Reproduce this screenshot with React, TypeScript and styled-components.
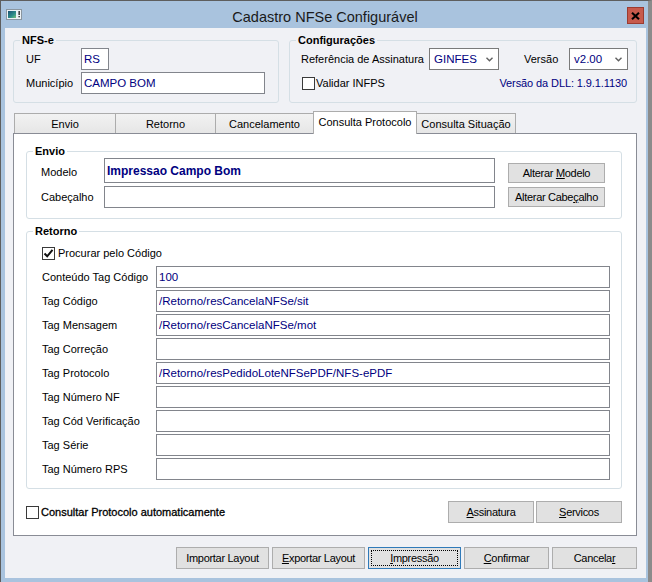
import React from 'react';
import styled, { createGlobalStyle } from 'styled-components';

const GlobalStyle = createGlobalStyle`
  html, body {
    margin: 0;
    padding: 0;
    background: #ffffff;
  }
  body {
    font-family: "Liberation Sans", Arial, sans-serif;
    font-size: 11px;
    color: #000;
  }
  * {
    box-sizing: border-box;
  }
`;

const Window = styled.div`
  width: 652px;
  height: 582px;
  display: flex;
  flex-direction: column;
  background: #a9c3de;
  border-top: 1px solid #5e5e5e;
  border-left: 1px solid #5e5e5e;
  border-right: 4px solid #8b8b8b;
`;

const TitleBar = styled.div`
  height: 27px;
  flex: none;
  display: grid;
  grid-template-columns: 1fr auto 1fr;
  align-items: center;
  padding: 0 4px 0 5px;
`;

const TitleText = styled.div`
  font-size: 14.5px;
  color: #1a1a1a;
  padding-top: 4px;
`;

const CloseButton = styled.div`
  justify-self: end;
  width: 17px;
  height: 17px;
  margin-top: 2px;
  background: #c75a4c;
  border: 1px solid #9c3b30;
  display: flex;
  align-items: center;
  justify-content: center;
`;

const Client = styled.div`
  flex: 1;
  margin: 0 2px 4px 4px;
  background: #f0f1f5;
  padding: 5px 9px 0 8px;
  display: flex;
  flex-direction: column;
`;

const TopRow = styled.div`
  display: flex;
  gap: 10px;
`;

const GroupBox = styled.fieldset<{ $w?: number }>`
  margin: 0;
  padding: 0;
  min-width: 0;
  border: 1px solid #d5dfe5;
  border-radius: 3px;
  width: ${(p) => (p.$w ? `${p.$w}px` : 'auto')};
`;

const Legend = styled.legend`
  margin-left: 6px;
  padding: 0 2px;
  font-weight: bold;
  font-size: 11px;
  line-height: 14px;
`;

const NfseBody = styled.div`
  display: grid;
  grid-template-columns: 55px auto;
  row-gap: 2px;
  align-items: center;
  justify-items: start;
  padding: 1px 0 8px 12px;
`;

const ConfigBody = styled.div`
  display: flex;
  flex-direction: column;
  gap: 2px;
  padding: 1px 8px 8px 11px;
`;

const Line = styled.div<{ $between?: boolean }>`
  display: flex;
  align-items: center;
  height: 22px;
  justify-content: ${(p) => (p.$between ? 'space-between' : 'flex-start')};
`;

const Label = styled.span<{ $w?: number; $ml?: number }>`
  flex: none;
  width: ${(p) => (p.$w ? `${p.$w}px` : 'auto')};
  margin-left: ${(p) => p.$ml ?? 0}px;
  white-space: nowrap;
  line-height: 22px;
`;

const TextBox = styled.input<{ $w?: number; $tall?: boolean }>`
  width: ${(p) => (p.$w ? `${p.$w}px` : 'auto')};
  flex: ${(p) => (p.$w ? 'none' : '1')};
  min-width: 0;
  height: ${(p) => (p.$tall ? 25 : 22)}px;
  margin: 0;
  padding: 0 2px;
  border: 1px solid #82858c;
  border-radius: 0;
  background: #fff;
  color: #000080;
  font-family: "Liberation Sans", Arial, sans-serif;
  font-size: ${(p) => (p.$tall ? 12 : 11.5)}px;
  font-weight: ${(p) => (p.$tall ? 'bold' : 'normal')};
  outline: none;
`;

const SelectBox = styled.div<{ $w: number }>`
  width: ${(p) => p.$w}px;
  flex: none;
  height: 22px;
  display: flex;
  align-items: center;
  justify-content: space-between;
  padding: 0 5px 0 4px;
  background: #fff;
  border: 1px solid #7a7a7a;
  color: #000080;
  font-size: 11.5px;
`;

const CheckWrap = styled.label<{ $gap?: number; $ml?: number }>`
  display: inline-flex;
  align-items: center;
  gap: ${(p) => p.$gap ?? 3}px;
  margin-left: ${(p) => p.$ml ?? 0}px;
  white-space: nowrap;
`;

const Box = styled.span`
  width: 13px;
  height: 13px;
  flex: none;
  border: 1px solid #3a3a3a;
  background: #fff;
  display: flex;
  align-items: center;
  justify-content: center;
`;

const AutoText = styled.span`
  -webkit-text-stroke: 0.3px #000;
`;

const DllText = styled.span`
  color: #000080;
  margin-right: 1px;
  letter-spacing: -0.1px;
`;

const TabStrip = styled.div`
  display: flex;
  align-items: flex-end;
  height: 22px;
  margin-top: 8px;
  padding-left: 1px;
`;

const Tab = styled.div<{ $active?: boolean; $w: number }>`
  position: relative;
  z-index: ${(p) => (p.$active ? 1 : 0)};
  width: ${(p) => p.$w}px;
  height: ${(p) => (p.$active ? 23 : 20)}px;
  margin-left: -1px;
  margin-bottom: ${(p) => (p.$active ? -1 : 0)}px;
  padding-bottom: ${(p) => (p.$active ? 2 : 0)}px;
  border: 1px solid #acacac;
  border-bottom: none;
  background: ${(p) => (p.$active ? '#ffffff' : 'linear-gradient(#f2f2f2, #e6e6e6)')};
  display: flex;
  align-items: center;
  justify-content: center;
  white-space: nowrap;
  &:first-child {
    margin-left: 0;
  }
`;

const Panel = styled.div`
  border: 1px solid #898c95;
  background: #fff;
  padding: 10px 14px 12px 12px;
  display: flex;
  flex-direction: column;
`;

const EnvioBody = styled.div`
  display: flex;
  flex-direction: column;
  gap: 3px;
  padding: 0 16px 10px 14px;
`;

const EnvioRow = styled.div<{ $tall?: boolean }>`
  display: flex;
  align-items: ${(p) => (p.$tall ? 'flex-end' : 'center')};
  height: ${(p) => (p.$tall ? 25 : 22)}px;
`;

const RetornoBody = styled.div`
  display: flex;
  flex-direction: column;
  gap: 2px;
  padding: 4px 11px 8px 15px;
  margin-top: 0;
`;

const RetornoGroup = styled(GroupBox)`
  margin-top: 5px;
`;

const Footer = styled.div`
  display: flex;
  align-items: center;
  height: 22px;
  margin-top: 12px;
  gap: 2px;
`;

const Spacer = styled.div`
  flex: 1;
`;

const Button = styled.button<{ $w: number; $h?: number; $focused?: boolean }>`
  width: ${(p) => p.$w}px;
  height: ${(p) => p.$h ?? 22}px;
  flex: none;
  margin: 0;
  padding: 0;
  background: #e1e1e1;
  border: 1px solid ${(p) => (p.$focused ? '#2f7ab9' : '#adadad')};
  border-radius: 0;
  color: #000;
  font-family: "Liberation Sans", Arial, sans-serif;
  font-size: 11px;
  letter-spacing: -0.3px;
  outline: ${(p) => (p.$focused ? '1px dotted #000' : 'none')};
  outline-offset: -4px;
  u {
    text-decoration: underline;
  }
`;

const SideButton = styled(Button)`
  margin-left: 13px;
`;

const BottomBar = styled.div`
  display: flex;
  justify-content: flex-end;
  gap: 3px;
  margin-top: 11px;
`;

function AppIcon() {
  return (
    <svg width="16" height="11" viewBox="0 0 16 11">
      <defs>
        <linearGradient id="ig" x1="0" y1="0" x2="1" y2="1">
          <stop offset="0" stopColor="#1b4f72" />
          <stop offset="0.6" stopColor="#2f8f8a" />
          <stop offset="1" stopColor="#7cc47a" />
        </linearGradient>
      </defs>
      <rect x="0.5" y="0.5" width="15" height="10" fill="#eef2f5" stroke="#8a96a0" />
      <rect x="2" y="2" width="8" height="7" fill="url(#ig)" />
      <rect x="12.5" y="2" width="1.3" height="4" fill="#1a1a1a" />
      <rect x="12.5" y="7" width="1.3" height="1.3" fill="#1a1a1a" />
    </svg>
  );
}

function Chevron() {
  return (
    <svg width="7" height="5" viewBox="0 0 7 5">
      <path d="M0.5 0.8 L3.5 3.8 L6.5 0.8" fill="none" stroke="#606060" strokeWidth="1.4" />
    </svg>
  );
}

function CheckBox({ checked }: { checked?: boolean }) {
  return (
    <Box>
      {checked && (
        <svg width="11" height="11" viewBox="0 0 11 11">
          <path d="M1.5 5.5 L4.2 8.3 L9.5 1.8" fill="none" stroke="#111" strokeWidth="2" />
        </svg>
      )}
    </Box>
  );
}

const retornoFields: { label: string; value: string }[] = [
  { label: 'Conteúdo Tag Código', value: '100' },
  { label: 'Tag Código', value: '/Retorno/resCancelaNFSe/sit' },
  { label: 'Tag Mensagem', value: '/Retorno/resCancelaNFSe/mot' },
  { label: 'Tag Correção', value: '' },
  { label: 'Tag Protocolo', value: '/Retorno/resPedidoLoteNFSePDF/NFS-ePDF' },
  { label: 'Tag Número NF', value: '' },
  { label: 'Tag Cód Verificação', value: '' },
  { label: 'Tag Série', value: '' },
  { label: 'Tag Número RPS', value: '' },
];

const tabs = [
  { name: 'Envio', w: 102 },
  { name: 'Retorno', w: 101 },
  { name: 'Cancelamento', w: 99 },
  { name: 'Consulta Protocolo', w: 104, active: true },
  { name: 'Consulta Situação', w: 100 },
];

export default function App() {
  return (
    <>
      <GlobalStyle />
      <Window>
        <TitleBar>
          <AppIcon />
          <TitleText>Cadastro NFSe Configurável</TitleText>
          <CloseButton>
            <svg width="9" height="8" viewBox="0 0 9 8">
              <path d="M1 0.8 L8 7.2 M8 0.8 L1 7.2" stroke="#000" strokeWidth="2.1" />
            </svg>
          </CloseButton>
        </TitleBar>

        <Client>
          <TopRow>
            <GroupBox $w={266}>
              <Legend>NFS-e</Legend>
              <NfseBody>
                <Label>UF</Label>
                <TextBox $w={28} defaultValue="RS" />
                <Label>Município</Label>
                <TextBox $w={184} defaultValue="CAMPO BOM" />
              </NfseBody>
            </GroupBox>

            <GroupBox $w={348}>
              <Legend>Configurações</Legend>
              <ConfigBody>
                <Line>
                  <Label $w={128}>Referência de Assinatura</Label>
                  <SelectBox $w={70}>
                    GINFES
                    <Chevron />
                  </SelectBox>
                  <Label $w={45} $ml={25}>Versão</Label>
                  <SelectBox $w={59}>
                    v2.00
                    <Chevron />
                  </SelectBox>
                </Line>
                <Line $between>
                  <CheckWrap $gap={1} $ml={1}>
                    <CheckBox />
                    Validar INFPS
                  </CheckWrap>
                  <DllText>Versão da DLL: 1.9.1.1130</DllText>
                </Line>
              </ConfigBody>
            </GroupBox>
          </TopRow>

          <TabStrip>
            {tabs.map((t) => (
              <Tab key={t.name} $w={t.w} $active={t.active}>
                {t.name}
              </Tab>
            ))}
          </TabStrip>

          <Panel>
            <GroupBox>
              <Legend>Envio</Legend>
              <EnvioBody>
                <EnvioRow $tall>
                  <Label $w={63}>Modelo</Label>
                  <TextBox $tall defaultValue="Impressao Campo Bom" />
                  <SideButton $w={97} $h={20}>
                    Alterar <u>M</u>odelo
                  </SideButton>
                </EnvioRow>
                <EnvioRow>
                  <Label $w={63}>Cabeçalho</Label>
                  <TextBox defaultValue="" />
                  <SideButton $w={97} $h={20}>
                    Alterar Cabe<u>ç</u>alho
                  </SideButton>
                </EnvioRow>
              </EnvioBody>
            </GroupBox>

            <RetornoGroup>
              <Legend>Retorno</Legend>
              <RetornoBody>
                <Line>
                  <CheckWrap $gap={3}>
                    <CheckBox checked />
                    Procurar pelo Código
                  </CheckWrap>
                </Line>
                {retornoFields.map((f) => (
                  <Line key={f.label}>
                    <Label $w={114}>{f.label}</Label>
                    <TextBox defaultValue={f.value} />
                  </Line>
                ))}
              </RetornoBody>
            </RetornoGroup>

            <Footer>
              <CheckWrap $gap={2}>
                <CheckBox />
                <AutoText>Consultar Protocolo automaticamente</AutoText>
              </CheckWrap>
              <Spacer />
              <Button $w={86}>
                <u>A</u>ssinatura
              </Button>
              <Button $w={86}>
                <u>S</u>ervicos
              </Button>
            </Footer>
          </Panel>

          <BottomBar>
            <Button $w={93}>Importar Layout</Button>
            <Button $w={93}>
              <u>E</u>xportar Layout
            </Button>
            <Button $w={93} $focused>
              <u>I</u>mpressão
            </Button>
            <Button $w={85}>
              <u>C</u>onfirmar
            </Button>
            <Button $w={85}>
              Cancela<u>r</u>
            </Button>
          </BottomBar>
        </Client>
      </Window>
    </>
  );
}
